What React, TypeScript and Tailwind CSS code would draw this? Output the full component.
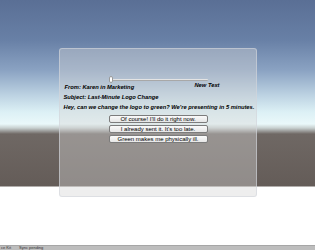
export default function App() {
  const choices = [
    "Of course! I'll do it right now.",
    "I already sent it. It's too late.",
    "Green makes me physically ill.",
  ];

  return (
    <div className="w-[315px] h-[250px] overflow-hidden flex flex-col font-['Liberation_Sans',Arial,sans-serif] text-black">
      {/* game view */}
      <div className="h-[245px] shrink-0 pt-[48px] bg-[linear-gradient(to_bottom,#5a6f95_0px,#6880a6_40px,#8aa2c2_70px,#bcd2e2_95px,#dcf0f5_112px,#eaf8fa_124px,#c8d0d0_128px,#6f6864_134px,#645c58_186px,#ffffff_187px,#ffffff_245px)]">
        <div className="mx-auto w-[198px] h-[149px] rounded-[3px] border border-[#d2d6dc]/60 bg-[rgba(212,212,212,0.4)] flex flex-col pt-[27px]">
          <div className="relative ml-[49px] w-[99px] h-[7px]">
            <div className="absolute left-0 right-0 top-[3px] h-[2px] rounded-full bg-[#e4e4e4] border-b border-[#a8a8a8]" />
            <div className="absolute left-0 top-0 w-[4px] h-[7px] rounded-[2px] bg-white border border-[#9a9a9a]" />
          </div>
          <div className="flex justify-between items-start pl-[5px] pr-[36px] text-[5.75px] leading-[7px] font-bold italic">
            <span className="mt-[1px]">From: Karen in Marketing</span>
            <span className="-mt-[1px]">New Text</span>
          </div>
          <div className="pl-[4px] mt-[3px] text-[5.75px] leading-[7px] font-bold italic">
            Subject: Last-Minute Logo Change
          </div>
          <div className="pl-[4px] mt-[3px] text-[5.75px] leading-[7px] font-bold italic whitespace-nowrap">
            Hey, can we change the logo to green? We're presenting in 5 minutes.
          </div>
          <div className="flex flex-col items-center gap-[2px] mt-[4px] pl-[1px]">
            {choices.map((c) => (
              <div
                key={c}
                className="w-[99px] h-[8px] rounded-[2px] border border-[#7c7c7c] bg-[linear-gradient(to_bottom,#fafafa,#e6e6e6)] flex items-center justify-center text-[6px] leading-none whitespace-nowrap"
              >
                {c}
              </div>
            ))}
          </div>
        </div>
      </div>
      {/* status bar */}
      <div className="h-[5px] shrink-0 bg-[#bdbdbd] border-t border-[#a6a6a6] flex items-start gap-[8px] text-[4px] leading-[4px] text-[#333] pl-[1px] whitespace-nowrap overflow-hidden">
        <span>ce Kit</span>
        <span>Sync pending</span>
      </div>
    </div>
  );
}
